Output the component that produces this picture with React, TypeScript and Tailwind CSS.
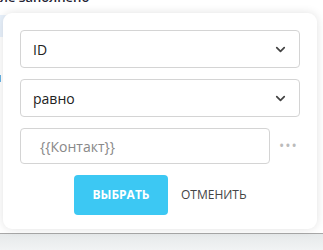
import { ChevronDown } from 'lucide-react';

function SelectField({ value }: { value: string }) {
  return (
    <div className="flex h-[38px] items-center justify-between rounded-[4px] border border-[#d4d4d4] bg-white pl-[12px] pr-[11px]">
      <span className="text-[14px] text-[#222]">{value}</span>
      <ChevronDown size={15} strokeWidth={2.75} className="text-[#444]" />
    </div>
  );
}

export default function App() {
  return (
    <div
      className="relative h-[250px] w-[323px] overflow-hidden bg-white"
      style={{ fontFamily: '"Open Sans", "Noto Sans", sans-serif' }}
    >
      {/* page behind the popup */}
      <div className="flex h-[233px] flex-col">
        <div className="-mt-[10px] text-[13px] font-semibold leading-[14px] text-[#223]">ле заполнено</div>
        <div className="mt-[7px] flex flex-1">
          <div className="flex w-[10px] flex-col gap-[9px] pt-[4px] text-[12px] leading-[12px] text-[#222]">
            <span className="-ml-[6px] h-[22px] bg-[#e8f1fb] text-[#3a6bb0]">,</span>
            <span className="-ml-[6px] mt-[26px]">u</span>
            <span className="-ml-[6px]">.</span>
            <span className="-ml-[6px]">.</span>
            <span className="-ml-[6px]">1</span>
          </div>
        </div>
      </div>
      <div className="h-[1px] bg-[#a8a8a8]" />
      <div className="h-[16px] bg-gradient-to-b from-[#e6e9ea] to-[#f1f3f4]" />

      {/* popup */}
      <div className="absolute left-[3px] top-[13px] flex h-[216px] w-[314px] flex-col rounded-[9px] bg-white px-[17px] pt-[17px] shadow-[0_0_10px_rgba(0,0,0,0.12)]">
        <SelectField value="ID" />
        <div className="mt-[11px]">
          <SelectField value="равно" />
        </div>
        <div className="mt-[11px] flex items-center">
          <div className="flex h-[36px] w-[250px] items-center rounded-[4px] border border-[#d4d4d4] bg-white pl-[19px] text-[14px] text-[#888]">
            {'{{Контакт}}'}
          </div>
          <span className="ml-[9px] text-[14px] leading-none tracking-[1px] text-[#bbb]">•••</span>
        </div>
        <div className="mt-[11px] flex items-center pl-[54px]">
          <button
            type="button"
            className="flex h-[40px] w-[94px] items-center justify-center rounded-[4px] bg-[#3cc8f3] text-[12px] font-bold text-white"
          >
            ВЫБРАТЬ
          </button>
          <button type="button" className="ml-[13px] text-[12px] font-normal text-[#444]">
            ОТМЕНИТЬ
          </button>
        </div>
      </div>
    </div>
  );
}
